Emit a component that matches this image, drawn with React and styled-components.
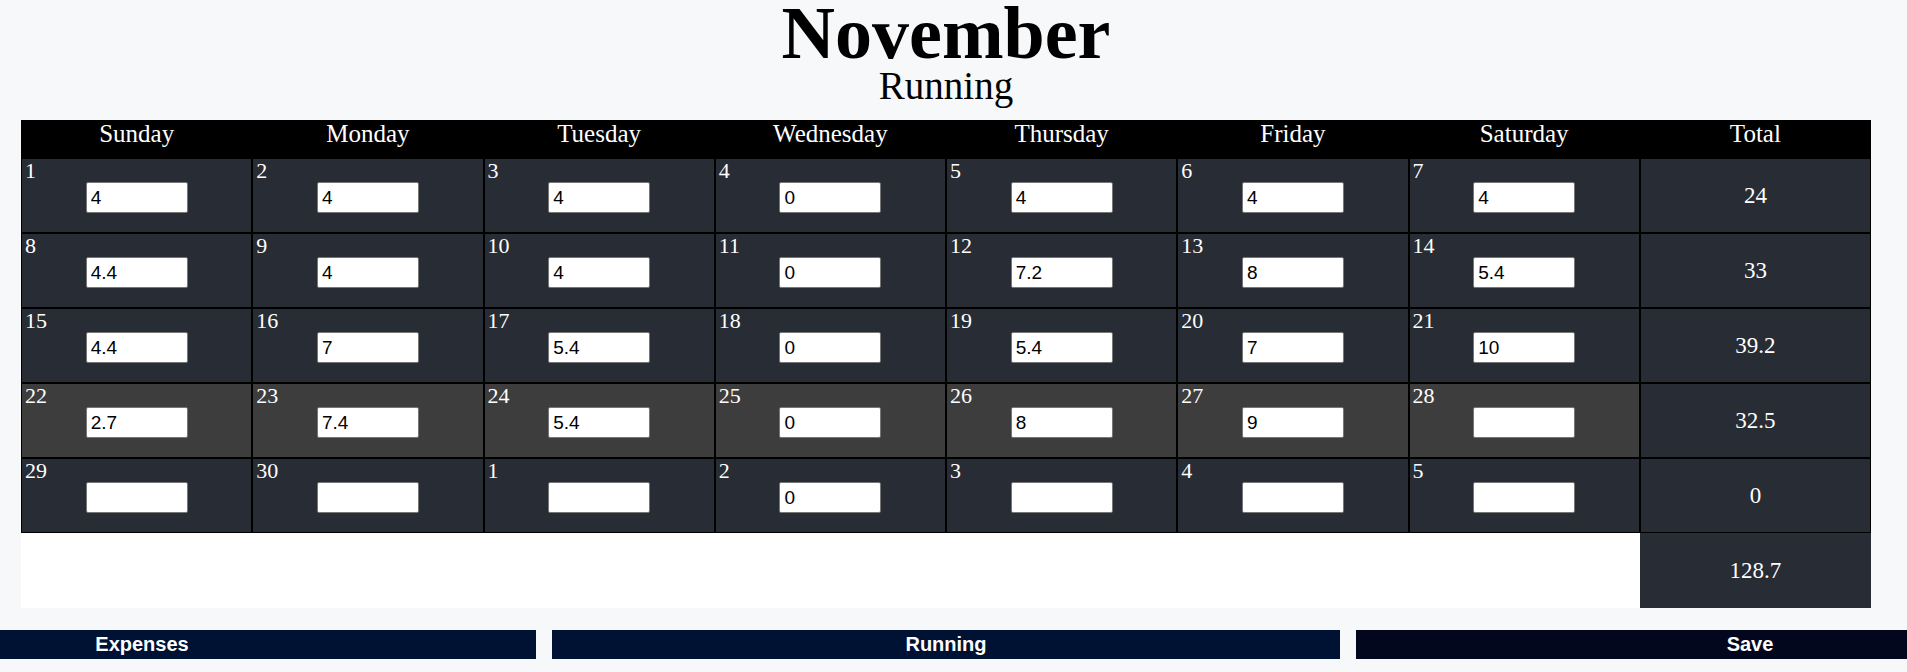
import React, { useState } from 'react';
import styled, { createGlobalStyle } from 'styled-components';

const GlobalStyle = createGlobalStyle`
  body {
    margin: 0;
    background: #f7f8fa;
    overflow-x: hidden;
    font-family: "Liberation Serif", "Times New Roman", serif;
  }
`;

const StyledPage = styled.div`
  width: 1892px;
  display: flex;
  flex-direction: column;
  align-items: center;
`;

const StyledTitle = styled.h1`
  margin: 0;
  font-size: 74px;
  line-height: 66px;
  font-weight: 700;
  color: #000;
`;

const StyledSubtitle = styled.h2`
  margin: 0 0 14px;
  font-size: 39px;
  line-height: 40px;
  font-weight: 400;
  color: #000;
`;

const StyledCalendar = styled.div`
  width: 1850px;
  display: grid;
  grid-template-columns: repeat(8, 1fr);
`;

const StyledHeadCell = styled.div`
  height: 38px;
  background: #000;
  color: #fff;
  font-size: 25px;
  line-height: 28px;
  text-align: center;
`;

const StyledDayCell = styled.div`
  box-sizing: border-box;
  height: 75px;
  border: 1px solid #000;
  background: ${props => (props.$highlight ? '#3d3d3d' : '#282c34')};
  color: #fff;
  padding: 0 3px;
  display: flex;
  flex-direction: column;
`;

const StyledDayNumber = styled.div`
  font-size: 22px;
  line-height: 23px;
`;

const StyledInput = styled.input`
  align-self: center;
  box-sizing: border-box;
  width: 102px;
  height: 31px;
  padding: 0 4px;
  border: 1px solid #767676;
  border-radius: 2px;
  background: #fff;
  color: #000;
  font-family: "Liberation Sans", Arial, sans-serif;
  font-size: 19px;
`;

const StyledTotalCell = styled.div`
  box-sizing: border-box;
  height: 75px;
  border: ${props => (props.$plain ? 'none' : '1px solid #000')};
  background: #282c34;
  color: #fff;
  font-size: 23px;
  display: flex;
  align-items: center;
  justify-content: center;
`;

const StyledBlank = styled.div`
  grid-column: span 7;
  height: 75px;
  background: #fff;
`;

const StyledButtonRow = styled.div`
  width: 1892px;
  margin-top: 22px;
  display: flex;
  justify-content: center;
  gap: 16px;
`;

const StyledButton = styled.button`
  flex: 0 0 788px;
  height: 29px;
  border: none;
  padding: 0;
  background: ${props => (props.$dark ? '#03071e' : '#001233')};
  color: #fff;
  font-family: "Liberation Sans", Arial, sans-serif;
  font-size: 20px;
  font-weight: 700;
  cursor: pointer;
`;

const days = ['Sunday', 'Monday', 'Tuesday', 'Wednesday', 'Thursday', 'Friday', 'Saturday'];

const initialWeeks = [
  { days: [1, 2, 3, 4, 5, 6, 7], values: ['4', '4', '4', '0', '4', '4', '4'] },
  { days: [8, 9, 10, 11, 12, 13, 14], values: ['4.4', '4', '4', '0', '7.2', '8', '5.4'] },
  { days: [15, 16, 17, 18, 19, 20, 21], values: ['4.4', '7', '5.4', '0', '5.4', '7', '10'] },
  { days: [22, 23, 24, 25, 26, 27, 28], values: ['2.7', '7.4', '5.4', '0', '8', '9', ''], current: true },
  { days: [29, 30, 1, 2, 3, 4, 5], values: ['', '', '', '0', '', '', ''] }
];

const round = n => Math.round(n * 10) / 10;

const sumWeek = values => round(values.reduce((acc, v) => acc + (parseFloat(v) || 0), 0));

const App = () => {
  const [weeks, setWeeks] = useState(initialWeeks);

  const handleChange = (w, d, value) => {
    setWeeks(prev =>
      prev.map((week, i) =>
        i === w ? { ...week, values: week.values.map((v, j) => (j === d ? value : v)) } : week
      )
    );
  };

  const grandTotal = round(weeks.reduce((acc, week) => acc + sumWeek(week.values), 0));

  return (
    <StyledPage>
      <GlobalStyle />
      <StyledTitle>November</StyledTitle>
      <StyledSubtitle>Running</StyledSubtitle>

      <StyledCalendar>
        {days.map(day => (
          <StyledHeadCell key={day}>{day}</StyledHeadCell>
        ))}
        <StyledHeadCell>Total</StyledHeadCell>

        {weeks.map((week, w) => (
          <React.Fragment key={w}>
            {week.days.map((num, d) => (
              <StyledDayCell key={d} $highlight={week.current}>
                <StyledDayNumber>{num}</StyledDayNumber>
                <StyledInput
                  value={week.values[d]}
                  onChange={e => handleChange(w, d, e.target.value)}
                />
              </StyledDayCell>
            ))}
            <StyledTotalCell>{sumWeek(week.values)}</StyledTotalCell>
          </React.Fragment>
        ))}

        <StyledBlank />
        <StyledTotalCell $plain>{grandTotal}</StyledTotalCell>
      </StyledCalendar>

      <StyledButtonRow>
        <StyledButton>Expenses</StyledButton>
        <StyledButton>Running</StyledButton>
        <StyledButton $dark>Save</StyledButton>
      </StyledButtonRow>
    </StyledPage>
  );
};

export default App;
